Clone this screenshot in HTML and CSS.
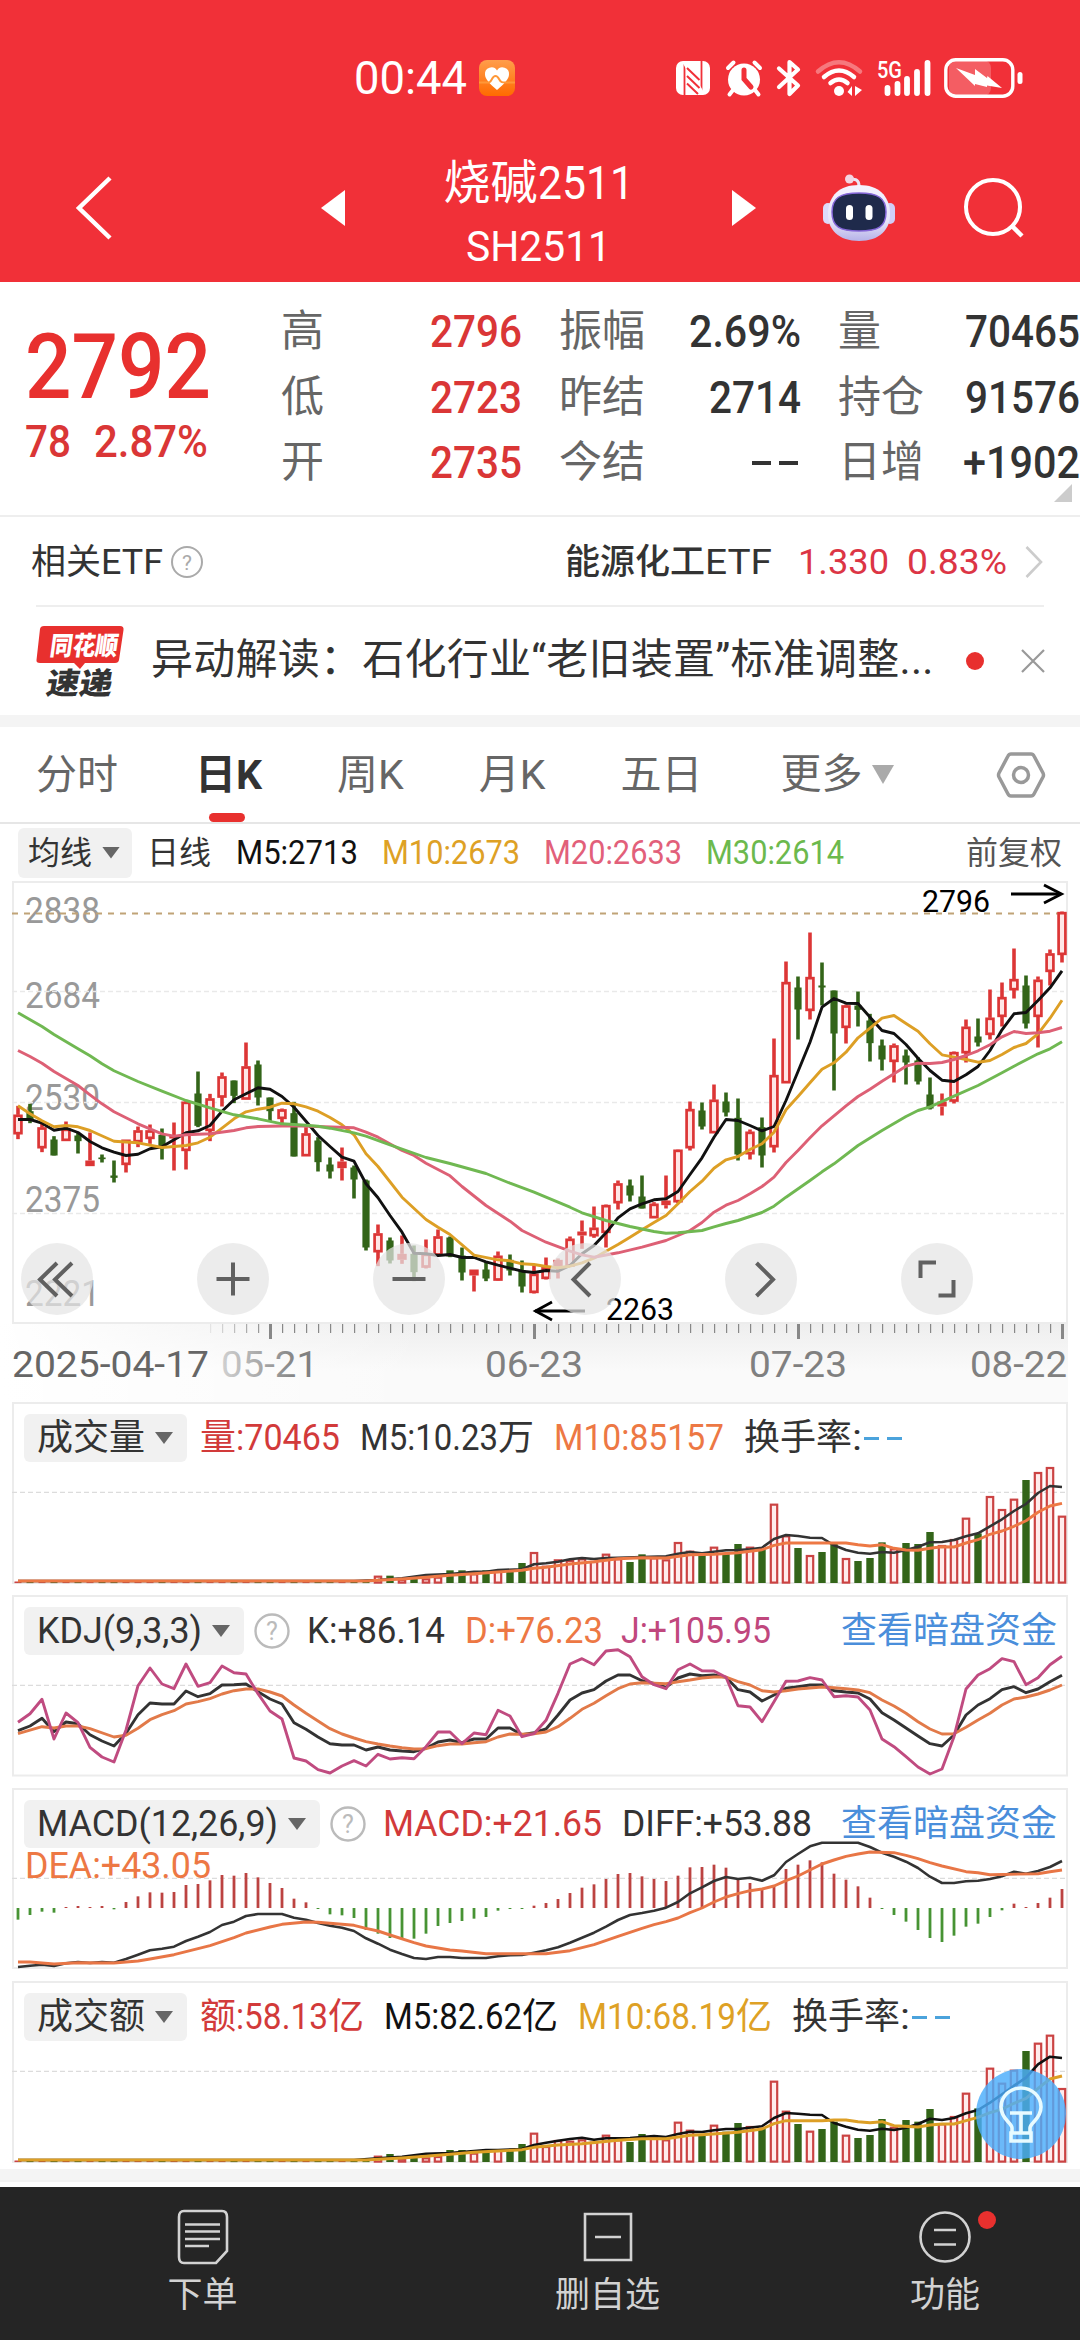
FILE: index.html
```html
<!DOCTYPE html>
<html lang="zh-CN">
<head>
<meta charset="utf-8">
<title>烧碱2511</title>
<link rel="stylesheet" href="styles.css">
</head>
<body>
<header class="top">
  <div class="status">
    <div class="clock"><span class="fit" data-w="113">00:44</span>
      <svg width="36" height="36" viewBox="0 0 36 36"><defs><linearGradient id="hg" x2="0" y2="1"><stop offset="0" stop-color="#ff9d4b"/><stop offset="1" stop-color="#ff6a00"/></linearGradient></defs><rect width="36" height="36" rx="8" fill="url(#hg)"/><path d="M18 30C11 24 6 19 6 14.500A6.500 6.500 0 0 1 18 10.500A6.500 6.500 0 0 1 30 14.500C30 19 25 24 18 30Z" fill="#fff"/><path d="M0 22.500H6C10 22.500 11 23 13 19C15 15 18 15 20 19C22 23 24 22.500 28 22.500H36" fill="none" stroke="#ff9838" stroke-width="2"/></svg>
    </div>
    <div class="signals">
      <svg width="34" height="36" viewBox="0 0 34 36"><rect x="0" y="1" width="34" height="34" rx="7" fill="#fff"/><path d="M8.500 4V35M25.500 1V32" stroke="#f13038" stroke-width="1.800"/><path d="M9 3L26 33" stroke="#fff" stroke-width="4"/><path d="M11 8L23.500 20M11 16L23.500 28M11 23.500L22 34" stroke="#f13038" stroke-width="2"/></svg>
      <svg width="38" height="36" viewBox="0 0 38 36"><circle cx="19" cy="19.500" r="16" fill="#fff"/><path d="M3 8L8.500 2.500M35 8L29.500 2.500M8 30L4.500 34.500M30 30L33.500 34.500" stroke="#fff" stroke-width="4" stroke-linecap="round"/><path d="M19 10V19L26 27" stroke="#f13038" stroke-width="5" fill="none" stroke-linecap="round"/></svg>
      <svg width="24" height="36" viewBox="0 0 24 36"><path d="M2 8.500L21 25.500L12.500 34V2L21 9.500L2 27" fill="none" stroke="#fff" stroke-width="4.200" stroke-linejoin="round" stroke-linecap="round"/></svg>
      <svg width="46" height="36" viewBox="0 0 46 36"><g fill="none" stroke="#fff" stroke-linecap="round" stroke-width="4.500"><path d="M2 11.500Q23-7 44 11.500" opacity=".35"/><path d="M8 17Q23 4 38 17"/><path d="M14.500 23Q23 16 31.500 23"/></g><circle cx="23" cy="31" r="5" fill="#fff"/><path d="M36 26V36L31.500 32ZM39 26V36L46 30Z" fill="#fff"/></svg>
      <svg width="54" height="36" viewBox="0 0 54 36"><text x="0" y="18" font-size="24" font-weight="500" fill="#fff" textLength="25" lengthAdjust="spacingAndGlyphs">5G</text><path d="M10.500 28V33M20.500 24V33M30 19V33M40 12V33M50.500 3V33" stroke="#fff" stroke-width="5.800" stroke-linecap="round"/></svg>
      <svg width="80" height="40" viewBox="0 0 80 40"><rect x="5" y="2" width="42" height="36" rx="8" fill="#fff" opacity=".22"/><rect x="1.800" y="1.800" width="67" height="36.400" rx="10" fill="none" stroke="#fff" stroke-width="3.400"/><rect x="73.500" y="14" width="5" height="12" rx="2.500" fill="#fff"/><path d="M12 10L31 17V11L43 20L43.500 18L58 30L43 27.500V29L31 26V28Z" fill="#fff"/></svg>
    </div>
  </div>
  <nav class="titlebar">
    <svg class="back" width="36" height="64" viewBox="0 0 36 64"><path d="M34 2L3 32L34 62" fill="none" stroke="#fff" stroke-width="4.500"/></svg>
    <svg class="prev" width="24" height="36" viewBox="0 0 24 36"><path d="M24 0V36L0 18Z" fill="#fff"/></svg>
    <div class="name"><b>烧碱<span class="fit" data-w="96">2511</span></b><small><span class="fit" data-w="145">SH2511</span></small></div>
    <svg class="next" width="24" height="36" viewBox="0 0 24 36"><path d="M0 0V36L24 18Z" fill="#fff"/></svg>
    <svg class="robot" width="74" height="68" viewBox="0 0 74 68"><defs><linearGradient id="rb" x2="0" y2="1"><stop offset="0" stop-color="#f5f3ff"/><stop offset=".65" stop-color="#e6e4f8"/><stop offset="1" stop-color="#b5b2e8"/></linearGradient></defs><path d="M37 12C37 6 34 5 28 5" fill="none" stroke="#ebe4f5" stroke-width="3"/><circle cx="27.500" cy="5" r="4.500" fill="#f3d5e2"/><rect x="1" y="29" width="10" height="21" rx="5" fill="#dddafa"/><rect x="63" y="29" width="10" height="21" rx="5" fill="#d1cdf7"/><path d="M37 11C57 11 67 22 68 38C69 56 57 67 37 67C17 67 5 56 6 38C7 22 17 11 37 11Z" fill="url(#rb)"/><path d="M37 19C56 19 64 24 64 38C64 53 56 57 37 57C18 57 10 53 10 38C10 24 18 19 37 19Z" fill="#1f2a4b" stroke="#8567d8" stroke-width="1.500"/><rect x="24" y="31" width="7" height="15" rx="3.500" fill="#fff"/><rect x="43.500" y="31" width="7" height="15" rx="3.500" fill="#fff"/></svg>
    <svg class="search" width="62" height="62" viewBox="0 0 62 62"><circle cx="29" cy="30" r="27" fill="none" stroke="#fff" stroke-width="4"/><path d="M47 48L58 59" stroke="#fff" stroke-width="4.500"/></svg>
  </nav>
</header>

<section class="quote">
  <div class="price"><div class="last"><span class="fit" data-w="186">2792</span></div><div class="chg"><span class="fit" data-w="46">78</span><span class="fit" data-w="114">2.87%</span></div></div>
  <dl class="c1"><dt>高</dt><dd><span class="fit" data-w="92">2796</span></dd><dt>低</dt><dd><span class="fit" data-w="92">2723</span></dd><dt>开</dt><dd><span class="fit" data-w="92">2735</span></dd></dl>
  <dl class="c2"><dt>振幅</dt><dd><span class="fit" data-w="112">2.69%</span></dd><dt>昨结</dt><dd><span class="fit" data-w="92">2714</span></dd><dt>今结</dt><dd class="none"><i></i><i></i></dd></dl>
  <dl class="c3"><dt>量</dt><dd><span class="fit" data-w="115">70465</span></dd><dt>持仓</dt><dd><span class="fit" data-w="115">91576</span></dd><dt>日增</dt><dd><span class="fit" data-w="117">+1902</span></dd></dl>
  <svg class="corner" width="18" height="18" viewBox="0 0 18 18"><path d="M18 0V18H0Z" fill="#ccc"/></svg>
</section>

<section class="etf">
  <span>相关<span class="fit" data-w="62">ETF</span></span>
  <svg class="help" width="34" height="34" viewBox="0 0 34 34"><circle cx="17" cy="17" r="15" fill="none" stroke="#aaa" stroke-width="2"/><text x="17" y="24.500" font-size="21" text-anchor="middle" fill="#aaa">?</text></svg>
  <span class="fund">能源化工<span class="fit" data-w="67">ETF</span></span>
  <span class="red"><span class="fit" data-w="91">1.330</span></span>
  <span class="red pct"><span class="fit" data-w="100">0.83%</span></span>
  <svg class="go" width="18" height="32" viewBox="0 0 18 32"><path d="M1.500 1L16 16L1.500 31" fill="none" stroke="#ccc" stroke-width="2.600"/></svg>
</section>

<section class="news">
  <svg class="badge" width="90" height="74" viewBox="0 0 90 74"><path d="M8 2H84Q88 2 87.500 6L83 36Q82.500 39 79 39H49L44 45L38 39H4Q0 39 .500 36L4 5Q4.500 2 8 2Z" fill="#e8302e"/><text x="0" y="0" transform="translate(13 31) skewX(-8)" font-size="26" font-weight="900" fill="#fff" textLength="68" lengthAdjust="spacingAndGlyphs">同花顺</text><text x="0" y="0" transform="translate(9 70) skewX(-10)" font-size="30" font-weight="900" fill="#333" textLength="66" lengthAdjust="spacingAndGlyphs">速递</text></svg>
  <p>异动解读：石化行业“老旧装置”标准调整...</p>
  <i class="dot"></i>
  <svg class="close" width="24" height="24" viewBox="0 0 24 24"><path d="M1 1L23 23M23 1L1 23" stroke="#999" stroke-width="2.200"/></svg>
</section>

<nav class="tabs">
  <span>分时</span><span class="on">日K</span><span>周K</span><span>月K</span><span>五日</span><span class="more">更多<svg width="22" height="19" viewBox="0 0 22 19"><path d="M0 0H22L11 19Z" fill="#aaa"/></svg></span>
  <svg class="gear" width="48" height="46" viewBox="0 0 48 46"><path d="M14 2H34Q36 2 37 4L46 21Q47 23 46 25L37 42Q36 44 34 44H14Q12 44 11 42L2 25Q1 23 2 21L11 4Q12 2 14 2Z" fill="none" stroke="#999" stroke-width="3.500"/><circle cx="24" cy="23" r="7.500" fill="none" stroke="#999" stroke-width="3.500"/></svg>
</nav>

<section class="ma">
  <span class="chip">均线<i class="tri"></i></span><span class="day">日线</span>
  <span class="m5"><span class="fit" data-w="122">M5:2713</span></span><span class="m10"><span class="fit" data-w="138">M10:2673</span></span><span class="m20"><span class="fit" data-w="138">M20:2633</span></span><span class="m30"><span class="fit" data-w="138">M30:2614</span></span>
  <span class="adj">前复权</span>
</section>

<section class="kline">
  <svg id="kline" width="1056" height="443" viewBox="12 880.500 1056 443"></svg>
  <div class="tools">
    <button><svg viewBox="0 0 72 72"><path d="M36 20L19 36.500L36 53M51 20L34 36.500L51 53"/></svg></button>
    <button><svg viewBox="0 0 72 72"><path d="M36 19.500V52.500M19.500 36H52.500"/></svg></button>
    <button><svg viewBox="0 0 72 72"><path d="M19.500 36H52.500"/></svg></button>
    <button><svg viewBox="0 0 72 72"><path d="M41 20L24.500 36.500L41 53"/></svg></button>
    <button><svg viewBox="0 0 72 72"><path d="M31.500 20L48 36.500L31.500 53"/></svg></button>
    <button><svg viewBox="0 0 72 72"><path d="M19.500 35V19.500H35M37.500 52.500H52.500V37"/></svg></button>
  </div>
</section>
<section class="axis"><svg id="axis" width="1056" height="78" viewBox="12 1324 1056 78"></svg></section>

<section class="panel">
  <svg id="vol" class="plot" width="1056" height="184" viewBox="12 1402 1056 184"></svg>
  <div class="legend"><span class="chip">成交量<i class="tri"></i></span><span class="r">量<span class="fit" data-w="104">:70465</span></span><span><span class="fit" data-w="138">M5:10.23</span>万</span><span class="o"><span class="fit" data-w="170">M10:85157</span></span><span>换手率<span class="fit" data-w="10">:</span></span><span class="dash"><i></i><i></i></span></div>
</section>
<section class="panel">
  <svg id="kdj" class="plot" width="1056" height="184" viewBox="12 1595 1056 184"></svg>
  <div class="legend"><span class="chip"><span class="fit" data-w="165">KDJ(9,3,3)</span><i class="tri"></i></span><svg class="help" width="36" height="36" viewBox="0 0 36 36"><circle cx="18" cy="18" r="16.500" fill="none" stroke="#bbb" stroke-width="2.400"/><text x="18" y="27" font-size="25" text-anchor="middle" fill="#bbb">?</text></svg><span><span class="fit" data-w="138">K:+86.14</span></span><span class="o"><span class="fit" data-w="138">D:+76.23</span></span><span class="p j"><span class="fit" data-w="150">J:+105.95</span></span><span class="link">查看暗盘资金</span></div>
</section>
<section class="panel">
  <svg id="macd" class="plot" width="1056" height="184" viewBox="12 1788 1056 184"></svg>
  <div class="legend"><span class="chip"><span class="fit" data-w="241">MACD(12,26,9)</span><i class="tri"></i></span><svg class="help" width="36" height="36" viewBox="0 0 36 36"><circle cx="18" cy="18" r="16.500" fill="none" stroke="#bbb" stroke-width="2.400"/><text x="18" y="27" font-size="25" text-anchor="middle" fill="#bbb">?</text></svg><span class="r"><span class="fit" data-w="219">MACD:+21.65</span></span><span><span class="fit" data-w="190">DIFF:+53.88</span></span><span class="link">查看暗盘资金</span></div>
  <div class="dea"><span class="fit" data-w="186">DEA:+43.05</span></div>
</section>
<section class="panel">
  <svg id="amt" class="plot" width="1056" height="184" viewBox="12 1981 1056 184"></svg>
  <div class="legend"><span class="chip">成交额<i class="tri"></i></span><span class="r">额<span class="fit" data-w="92">:58.13</span>亿</span><span class="k"><span class="fit" data-w="138">M5:82.62</span>亿</span><span class="y"><span class="fit" data-w="158">M10:68.19</span>亿</span><span>换手率<span class="fit" data-w="10">:</span></span><span class="dash"><i></i><i></i></span></div>
  <svg class="bulb" width="90" height="90" viewBox="0 0 90 90"><circle cx="45" cy="45" r="45" fill="#4badfb" opacity=".82"/><g fill="none" stroke="#e8fbff" stroke-width="3.600"><path d="M36 64V59C36 54 25 50 25 38A20 19 0 0 1 65 38C65 50 54 54 54 59V64"/><path d="M35 64H55V72H35ZM34 44H56M45 44V63"/></g></svg>
</section>
<div class="strip"></div>

<footer>
  <a><svg width="52" height="56" viewBox="0 0 52 56"><path d="M7 2H45Q50 2 50 8V42L39 54H7Q2 54 2 48V8Q2 2 7 2Z"/><path d="M8 15.500H43M8 22.500H43M8 30H43M8 37H32"/></svg>下单</a>
  <a><svg width="52" height="56" viewBox="0 0 52 56"><path d="M3 5H49V51H3ZM13 28H39"/></svg>删自选</a>
  <a><svg width="52" height="56" viewBox="0 0 52 56"><circle cx="26" cy="28" r="24.500"/><path d="M15 21H37M15 35.500H37"/></svg>功能<i class="dot"></i></a>
</footer>
<script src="chart.js"></script>
</body>
</html>
```
FILE: styles.css
```css
* { box-sizing: border-box; margin: 0; padding: 0; }
body { width: 1080px; height: 2340px; overflow: hidden; background: #fff; color: #333; font-family: Roboto, "Noto Sans CJK SC", sans-serif; font-size: 36px; line-height: 1; white-space: nowrap; }
svg { display: block; flex: none; overflow: visible; }
svg text { font-family: Roboto, "Noto Sans CJK SC", sans-serif; }
i { font-style: normal; }
.fit { display: inline-block; transform-origin: 0 50%; }

.top { height: 282px; background: #f13038; color: #fff; }
.status { height: 118px; padding: 58px 59px 0 354px; display: flex; justify-content: space-between; align-items: flex-start; }
.clock { display: flex; align-items: center; height: 40px; gap: 12px; font-size: 46px; }
.signals { display: flex; align-items: center; height: 40px; margin-right: -3px; }
.signals svg + svg { margin-left: 15px; }
.signals svg:nth-child(3) { margin-left: 14px; }
.signals svg:nth-child(6) { margin-left: 13px; }
.titlebar { height: 164px; display: flex; align-items: center; padding: 0 54px 0 76px; }
.titlebar > svg { position: relative; top: 8px; }
.back { margin-right: 209px; }
.name { width: 391px; height: 164px; padding-top: 40px; text-align: center; display: flex; flex-direction: column; align-items: center; }
.name b { font-weight: 400; font-size: 47px; line-height: 50px; }
.name small { font-size: 43px; line-height: 50px; margin-top: 13px; }
.robot { margin-left: 66px; }
.search { margin-left: 68px; }

.quote { height: 235px; border-bottom: 2px solid #eee; display: flex; position: relative; font-size: 45px; }
.price { width: 281px; padding: 44px 0 0 25px; color: #e8302e; font-weight: 500; }
.last { font-size: 90px; line-height: 84px; }
.chg { display: flex; gap: 23px; color: #da3636; margin-top: 7px; font-size: 44px; line-height: 50px; }
.quote dl { display: grid; grid-template-columns: auto 1fr; grid-auto-rows: 65.500px; padding-top: 17px; line-height: 65px; }
.quote dt { font-size: 43px; color: #666; }
.quote dd { text-align: right; font-weight: 500; }
.c1 { width: 241px; }
.c1 dd { color: #da3636; }
.c2 { width: 242px; margin-left: 37px; }
.c3 { width: 242px; margin-left: 37px; }
.quote .none { display: flex; justify-content: flex-end; align-items: center; gap: 8px; padding-right: 3px; }
.none i { width: 19px; height: 4px; background: #333; }
.corner { position: absolute; right: 8px; bottom: 13px; }

.etf { height: 90px; margin: 0 36px; border-bottom: 2px solid #eee; display: flex; align-items: center; font-size: 35px; padding-top: 2px; }
.etf > span:first-child { margin-left: -5px; }
.etf .help { margin-left: 7px; }
.fund { margin-left: 361px; font-weight: 500; }
.fund .fit { font-weight: 400; }
.red { color: #dc3545; margin-left: 26px; }
.pct { margin-left: 18px; }
.go { margin-left: 18px; }

.news { height: 108px; display: flex; align-items: center; padding-left: 36px; }
.badge { margin-right: 25px; }
.news p { width: 800px; font-size: 42px; line-height: 60px; margin-top: -2px; letter-spacing: .25px; }
.dot { display: block; width: 18px; height: 18px; border-radius: 50%; background: #e8302e; }
.news .dot { margin-left: 15px; }
.close { margin-left: 37px; }

.tabs { height: 109px; border-top: 12px solid #f4f4f4; border-bottom: 2px solid #e6e6e6; padding-left: 36px; display: flex; font-size: 41px; line-height: 97px; color: #666; }
.tabs span { position: relative; margin-right: 75px; height: 95px; }
.tabs .on { color: #333; font-weight: 700; margin-left: 2px; }
.tabs .on::after { content: ""; position: absolute; left: 14px; bottom: 0; width: 36px; height: 9px; border-radius: 5px; background: #e8302e; }
.tabs .more { display: flex; align-items: center; gap: 9px; margin: 0 103px 0 3px; }
.gear { margin-top: 25px; }

.ma { height: 57px; padding: 3px 18px; display: flex; align-items: center; font-size: 32px; }
.chip { display: flex; align-items: center; background: #f1f1f1; border-radius: 6px; color: #333; }
.ma .chip { height: 50px; padding: 0 12px 0 10px; gap: 10px; margin-right: 15px; }
.tri { width: 18px; height: 12px; background: #666; clip-path: polygon(0 0, 100% 0, 50% 100%); }
.ma .fit { font-size: 33px; font-weight: 450; }
.day { margin-right: 25px; }
.m5 { color: #111; margin-right: 24px; }
.m10 { color: #dea125; margin-right: 24px; }
.m20 { color: #e2607a; margin-right: 24px; }
.m30 { color: #6cb94d; }
.adj { margin-left: auto; color: #555; }

.kline { height: 443px; padding-left: 12px; position: relative; }
.tools { position: absolute; left: 21px; top: 362px; display: flex; gap: 104px; }
.tools button { width: 72px; height: 72px; border: 0; border-radius: 50%; background: rgba(229, 229, 229, .72); }
.tools path { fill: none; stroke: #606060; stroke-width: 4; }
.axis { height: 78px; padding-left: 12px; background: linear-gradient(90deg, #fff, rgba(255, 255, 255, 0) 40%), linear-gradient(#eee, #fafafa 60%, #fafafa); margin-right: 12px; }

.panel { position: relative; height: 193px; margin: 0 12px; }
.plot { position: absolute; left: 0; top: 0; }
.legend { position: relative; display: flex; align-items: center; padding: 12px 11px 0 12px; gap: 20px; }
.legend > .chip { height: 48px; padding: 0 14px 0 13px; gap: 10px; margin-right: -7px; border-radius: 6px; }
.legend .fit, .dea { font-weight: 450; }
.legend .help { margin: 0 -3px 0 -3px; }
.j { margin-left: -2px; }
.r { color: #d23a3a; }
.o, .dea { color: #ed7844; }
.p { color: #c0477d; }
.k { color: #111; }
.y { color: #dea125; }
.link { color: #4a8edb; margin-left: auto; }
.dash { display: flex; gap: 8px; margin-left: -18px; }
.dash i { width: 15px; height: 3px; background: #4ba3dc; }
.dea { position: absolute; left: 13px; top: 60px; }
.bulb { position: absolute; left: 964px; top: 88px; }
.strip { height: 13px; margin-bottom: 5px; margin-top: -5px; background: #f4f4f4; }

footer { height: 153px; background: #252525; display: grid; grid-template-columns: 3fr 3fr 2fr; color: #d2d2d2; }
footer a { position: relative; display: flex; flex-direction: column; align-items: center; gap: 11px; padding-top: 22px; font-size: 35px; line-height: 40px; }
footer svg { fill: none; stroke: #d2d2d2; stroke-width: 2.600; }
footer .dot { position: absolute; left: 168px; top: 24px; }
```
FILE: chart.js
```js
// Series are "index:value" lists; values are thirds of a pixel below each panel's origin.
const X = i => 18 + 12 * i;
const RED = '#dc3636', GREEN = '#336519';

function pairs(s) { return s.split(',').map(t => t.split(':').map(Number)); }
function line(s, oy, color, w = 2.9) {
  const pts = pairs(s).map(([i, v]) => X(i) + ',' + (v / 3 + oy).toFixed(1)).join(' ');
  return `<polyline points="${pts}" fill="none" stroke="${color}" stroke-width="${w}" stroke-linejoin="round"/>`;
}
function seg(x1, y1, x2, y2, c, w, dash) {
  return `<path d="M${x1} ${y1}L${x2} ${y2}" stroke="${c}" stroke-width="${w}" fill="none"${dash ? ` stroke-dasharray="${dash}"` : ''}/>`;
}
function text(x, y, s, w, c, size = 36, weight = 450, extra = '') {
  return `<text x="${x}" y="${y}" font-size="${size}" font-weight="${weight}" fill="${c}" textLength="${w}" lengthAdjust="spacingAndGlyphs" ${extra}>${s}</text>`;
}
function frame(y, h) { return `<rect x="13" y="${y}" width="1054" height="${h}" fill="#fff" stroke="#ececec" stroke-width="2"/>`; }

// daily candles: colour, high, body top, body bottom, low
const candles = `R706,733,788,806 G700,722,750,758 R758,771,830,845 G797,807,855,855 R753,775,808,808 G787,795,812,849 R786,870,887,887 G852,861,866,876 G870,915,922,936 R808,808,880,906 R768,780,812,830 R762,780,802,820 G774,793,830,867 R756,796,804,900 R692,694,838,897 G603,669,766,770 R670,684,778,812 R606,618,678,708 G630,630,676,698 R516,588,684,684 G570,582,681,705 G681,681,722,752 R714,717,742,758 G694,728,858,858 R770,789,854,854 G800,810,875,903 G861,882,903,924 R831,873,893,930 G885,891,927,984 G927,930,1131,1140 R1062,1089,1142,1187 G1101,1110,1170,1179 R1095,1150,1168,1180 G1125,1150,1205,1232 R1107,1150,1188,1194 R1077,1098,1152,1155 G1098,1101,1158,1160 G1131,1155,1206,1230 R1197,1197,1215,1263 G1175,1197,1224,1232 R1143,1156,1227,1230 G1152,1168,1200,1215 G1170,1200,1248,1266 R1185,1210,1264,1269 R1161,1190,1222,1227 R1164,1168,1188,1224 R1098,1105,1185,1188 R1050,1083,1095,1135 R1008,1072,1094,1102 R1002,1004,1084,1131 R930,939,995,1017 G927,945,975,993 G915,978,1014,1014 R995,1000,1040,1042 R915,990,1004,1014 R837,838,992,998 R693,716,830,840 G696,720,768,777 R642,688,785,785 G666,693,726,738 G684,742,852,870 R777,784,848,867 G741,770,855,891 R504,614,827,846 R273,335,635,636 G318,351,417,507 R186,320,418,447 G276,345,351,405 G360,360,489,660 R402,405,469,519 G363,405,418,468 G430,450,518,573 G507,525,567,600 R519,525,571,636 G537,555,576,642 G560,570,633,642 G621,672,714,717 R669,693,708,735 R543,545,690,699 R447,469,545,576 G444,498,516,528 R357,442,490,507 R336,380,436,468 R234,326,356,384 G315,345,459,474 R318,328,436,531 R237,249,301,345 R123,125,250,276`.split(' ');

{
  const O = 870;
  let s = frame(881.5, 441);
  [[922.7, 2838], [1007.7, 2684], [1109.3, 2530], [1211.7, 2375], [1305.3, 2221]].forEach(([y, t]) => s += text(25, y, t, 75, '#999'));
  [991, 1102, 1213].forEach(y => s += seg(12, y, 1064, y, '#e9e9e9', 1.6, '5 3'));
  s += seg(12, 913, 1058, 913, '#c0a377', 2, '6 6');
  candles.forEach((d, i) => {
    const [h, t, b, l] = d.slice(1).split(',').map(v => v / 3 + O), x = X(i);
    if (d[0] === 'G') s += seg(x, h, x, l, GREEN, 3.6) + `<rect x="${x - 3.6}" y="${t}" width="7.2" height="${b - t}" fill="${GREEN}"/>`;
    else {
      s += seg(x, h, x, t, RED, 3.6) + seg(x, b, x, l, RED, 3.6);
      s += b - t < 7 ? `<rect x="${x - 4.7}" y="${t}" width="9.4" height="${b - t}" fill="${RED}"/>`
        : `<rect x="${x - 3.4}" y="${t + 1}" width="6.8" height="${b - t - 1}" fill="#ffe6e6" stroke="${RED}" stroke-width="2.7"/>`;
    }
  });
  s += line('0:747,1:747,2:758,3:779,4:773,5:786,6:813,7:832,8:845,9:855,10:851,11:835,12:829,13:808,14:787,15:781,16:765,17:722,18:688,19:670,20:652,21:656,22:678,23:710,24:752,25:795,26:828,27:860,28:872,29:940,30:982,31:1035,32:1085,33:1148,34:1150,35:1155,36:1152,37:1161,38:1161,39:1174,40:1184,41:1193,42:1202,43:1206,44:1200,45:1202,46:1185,47:1150,48:1125,49:1087,50:1042,51:1015,52:1000,53:988,54:985,55:963,56:912,57:862,58:800,59:747,60:750,61:765,62:781,63:768,64:690,65:603,66:515,67:410,68:384,69:398,70:399,71:440,72:480,73:489,74:522,75:563,76:600,77:629,78:633,79:613,80:588,81:540,82:478,83:430,84:426,85:390,86:352,87:301', O, '#111');
  s += line('0:706,1:730,2:751,3:769,4:765,5:769,6:780,8:812,10:817,12:831,14:825,15:817,16:800,17:773,18:745,19:724,20:716,21:710,22:698,23:700,24:709,25:722,26:741,27:763,28:793,29:850,30:888,32:980,34:1047,35:1070,36:1092,38:1154,40:1168,41:1171,42:1180,43:1182,44:1188,45:1192,46:1187,47:1177,48:1163,49:1142,50:1122,51:1100,52:1078,53:1056,54:1035,55:1000,56:963,57:932,58:893,59:868,60:858,61:837,62:820,63:785,64:718,65:678,66:637,67:596,68:577,69:545,70:502,71:473,72:443,73:435,74:459,75:482,76:520,77:553,78:560,79:567,80:575,81:570,82:552,83:531,84:519,85:490,86:443,87:389', O, '#dd9f25');
  s += line('0:540,1:558,2:578,3:603,5:645,6:673,7:700,8:724,10:760,12:790,13:797,14:793,16:790,18:780,19:772,20:768,23:766,28:772,29:785,30:800,32:840,33:855,34:878,36:916,37:948,39:1005,41:1052,42:1080,44:1115,46:1142,47:1153,48:1160,50:1147,52:1130,54:1110,56:1080,57:1056,58:1025,59:1004,60:990,61:970,62:948,63:920,64:876,65:840,66:802,67:766,68:736,69:706,70:678,71:656,72:632,73:610,74:587,75:578,76:579,77:576,78:567,79:555,80:541,81:523,82:499,83:483,84:489,85:487,86:482,87:471', O, '#dd6075');
  s += line('0:427,2:468,3:492,5:535,6:556,7:580,8:601,10:633,12:662,14:690,16:712,18:733,20:745,22:760,24:764,25:767,26:773,28:787,29:797,31:823,34:861,36:879,39:909,41:938,43:965,46:1010,47:1027,49:1050,51:1068,53:1083,54:1088,55:1087,57:1080,58:1069,59:1059,60:1050,62:1026,63:1007,64:980,66:930,67:904,68:880,70:825,72:780,74:738,75:720,76:709,78:677,80:645,82:607,83:587,85:550,86:535,87:514', O, '#70b852');
  s += text(922, 911, 2796, 68, '#000', 31, 400) + seg(1011, 893.5, 1061, 893.5, '#000', 2.8) + '<path d="M1044 884.5L1061.500 893.500L1044 902.500" fill="none" stroke="#000" stroke-width="2.8"/>';
  s += text(606, 1319.5, 2263, 68, '#000', 31, 400) + seg(535, 1310.5, 585, 1310.5, '#000', 2.8) + '<path d="M552 1301.5L535.500 1310.500L552 1319.500" fill="none" stroke="#000" stroke-width="2.8"/>';
  document.getElementById('kline').innerHTML = s;
}

{
  let s = '<defs><linearGradient id="fd" gradientUnits="userSpaceOnUse" x1="210" x2="300" y1="0" y2="0"><stop offset="0" stop-color="#808080" stop-opacity=".25"/><stop offset="1" stop-color="#808080"/></linearGradient></defs>';
  for (let i = 16; i < 88; i++) {
    const major = (i - 21) % 22 === 0, op = i < 21 ? (i - 15) * .17 : 1;
    s += `<rect x="${X(i) + (major ? -1 : 0)}" y="1324" width="${major ? 3 : 1.2}" height="${major ? 15 : 9}" fill="#888" opacity="${op}"/>`;
  }
  s += text(12, 1377, '2025-04-17', 197, '#666') + text(221, 1377, '05-21', 97, 'url(#fd)');
  s += text(485, 1377, '06-23', 98, '#808080') + text(749, 1377, '07-23', 98, '#808080') + text(970, 1377, '08-22', 97, '#808080');
  document.getElementById('axis').innerHTML = s;
}

function bars(spec, base, oy) {
  let s = '';
  for (let i = 0; i < 30; i++) s += `<rect x="${X(i) - 3.5}" y="${base - 1.5}" width="7" height="1.6" fill="${candles[i][0] === 'R' ? '#cb4343' : GREEN}"/>`;
  spec.split(' ').forEach((v, k) => {
    const i = k + 30, y = v / 3 + oy, x = X(i);
    s += candles[i][0] === 'G' ? `<rect x="${x - 3.7}" y="${y}" width="7.4" height="${base - y}" fill="${GREEN}"/>`
      : `<rect x="${x - 3.2}" y="${y + 1}" width="6.4" height="${base - y - 1.4}" fill="#ffecec" stroke="#cb4343" stroke-width="2.2"/>`;
  });
  return s;
}
function dashed(y) { return seg(12, y, 1065, y, '#dcdcdc', 1.2, '5 3'); }

{
  const O = 1390;
  let s = frame(1403, 180) + dashed(1492.4);
  s += bars('557 557 567 563 565 560 541 541 550 541 541 545 519 486 527 508 510 505 513 491 505 516 493 502 508 456 482 495 470 490 462 470 478 341 436 474 495 486 460 504 513 504 457 475 459 462 426 465 447 383 430 318 357 326 270 246 231 377', 1583, O);
  s += line('0:573,28:573,30:570,32:565,34:555,36:552,38:545,39:545,40:540,42:538,43:523,44:520,45:515,46:508,47:504,48:507,49:504,50:503,52:501,54:499,55:491,56:486,57:490,58:485,59:481,60:480,61:478,62:473,63:447,64:435,65:438,66:443,67:444,68:466,69:480,70:488,71:491,72:486,73:488,74:480,75:470,76:457,77:456,78:450,79:439,80:430,81:409,82:388,83:363,84:342,85:309,86:288,87:291', O, '#333', 2.6);
  s += line('0:573,29:573,30:571,32:567,34:562,36:556,38:551,40:546,42:541,43:535,44:532,46:522,48:515,50:506,52:503,54:504,56:494,58:493,60:488,62:479,63:466,64:459,69:459,70:464,71:468,72:464,73:475,74:480,75:481,76:475,77:470,78:471,79:459,80:449,81:433,82:423,83:409,84:392,85:367,86:348,87:340', O, '#ed7844');
  document.getElementById('vol').innerHTML = s;
}
{
  const O = 1390;
  let s = frame(1596, 179.5) + dashed(1685.4);
  s += line('0:1022,1:1008,2:985,3:1025,4:996,5:1001,6:1034,7:1053,8:1068,9:1030,10:974,11:939,12:942,13:942,14:903,15:920,16:911,17:885,18:884,19:882,20:905,21:927,22:942,23:998,24:1018,25:1041,26:1061,27:1065,28:1065,29:1080,30:1071,31:1080,32:1083,33:1085,34:1075,35:1056,36:1050,37:1058,38:1047,39:1047,40:1014,41:1014,42:1034,43:1028,44:1017,45:975,46:930,47:909,48:899,49:873,50:855,51:855,52:872,53:880,54:892,55:864,56:852,57:857,58:855,59:862,60:899,61:906,62:933,63:915,64:895,65:890,66:885,67:885,68:902,69:906,70:909,71:927,72:968,73:990,74:1014,75:1038,76:1061,77:1068,78:1035,79:975,80:945,81:926,82:899,83:890,84:908,85:897,86:875,87:856', O, '#333');
  s += line('0:1031,2:1010,3:1014,4:1008,5:1008,6:1016,8:1041,9:1036,10:1015,11:989,12:974,13:962,14:942,15:935,16:926,17:912,18:902,19:897,20:897,21:906,22:918,23:945,24:970,25:993,26:1016,27:1032,28:1044,29:1055,30:1062,31:1068,32:1073,33:1077,34:1076,35:1067,36:1062,37:1062,38:1058,39:1055,40:1041,41:1032,42:1033,43:1031,44:1026,45:1010,46:985,47:958,48:940,49:917,50:896,51:882,52:878,54:881,55:875,56:870,57:864,58:861,59:861,60:875,61:885,62:902,63:906,64:902,65:897,66:894,67:891,68:893,69:896,70:900,71:908,72:930,73:948,74:970,75:995,76:1017,77:1032,78:1031,79:1012,80:990,81:970,82:945,83:927,84:921,85:912,86:900,87:885', O, '#e27a49');
  s += line('0:997,1:971,2:928,3:1047,4:969,5:998,6:1072,7:1101,8:1116,9:1020,10:887,11:834,12:882,13:896,14:822,15:889,16:878,17:828,18:848,19:852,20:911,21:963,22:987,23:1104,24:1113,25:1139,26:1149,27:1128,28:1112,29:1128,30:1093,31:1107,32:1103,33:1106,34:1070,35:1026,36:1026,37:1061,38:1029,39:1034,40:961,41:978,42:1040,43:1031,44:991,45:910,46:822,47:806,48:824,49:783,50:779,51:800,52:860,53:884,54:896,55:839,56:822,57:842,58:843,59:862,60:947,61:951,62:995,63:935,64:874,65:873,66:863,67:870,68:920,69:917,70:921,71:960,72:1047,73:1070,74:1100,75:1131,76:1152,77:1137,78:1040,79:897,80:855,81:836,82:806,83:815,84:884,85:863,86:824,87:799', O, '#c04b80');
  document.getElementById('kdj').innerHTML = s;
}
{
  const O = 1780;
  let s = frame(1789, 179) + dashed(1878.4);
  '419 405 395 398 381 378 381 378 388 366 349 337 338 336 315 312 301 285 287 279 292 309 324 356 367 387 403 406 414 450 461 474 475 476 461 438 429 423 416 411 392 387 387 377 369 357 339 323 313 297 282 279 289 297 303 287 262 261 254 263 300 309 330 318 267 254 241 247 281 299 319 353 387 405 425 450 474 486 467 440 431 411 391 371 381 369 353 327'.split(' ').forEach((v, i) => {
    s += seg(X(i), 384 / 3 + O, X(i), v / 3 + O, v > 384 ? '#479334' : '#bc4341', 2.8);
  });
  s += line('0:561,1:557,2:554,3:558,4:550,5:546,6:549,7:546,8:548,9:537,10:524,11:511,12:506,13:500,14:483,15:470,16:456,17:435,18:425,19:408,20:402,22:402,23:413,24:419,25:429,26:437,27:443,28:453,29:475,30:491,31:509,32:522,33:534,34:537,35:531,36:531,37:534,39:534,40:529,41:526,42:525,43:518,44:511,45:502,46:488,47:473,48:458,49:440,50:420,51:405,52:399,53:392,54:383,55:366,56:340,57:322,58:303,59:291,60:297,61:293,62:302,63:286,64:246,65:222,66:199,67:188,70:188,71:201,72:218,73:230,74:245,75:264,76:290,77:309,78:309,79:304,80:302,81:297,82:289,83:275,84:281,85:273,86:261,87:243', O, '#333', 2.6);
  s += line('0:546,1:546,3:552,5:548,8:549,10:543,11:537,13:524,15:506,16:497,18:473,19:459,21:441,22:433,24:426,25:427,26:430,28:436,29:445,30:453,31:465,33:488,34:498,36:510,37:513,39:521,44:521,46:512,48:494,50:469,52:445,53:434,54:425,55:414,56:398,57:384,58:366,59:351,60:341,61:332,62:327,63:318,64:302,65:288,66:270,67:252,68:240,69:229,70:222,71:216,73:218,74:226,75:236,76:248,77:258,79:275,80:278,81:284,85:281,86:275,87:270', O, '#e87646');
  document.getElementById('macd').innerHTML = s;
}
{
  const O = 1780;
  let s = frame(1982, 180) + dashed(2071.4);
  s += bars('1127 1122 1135 1130 1132 1128 1110 1110 1118 1107 1108 1112 1092 1058 1098 1080 1082 1078 1085 1064 1078 1086 1062 1072 1078 1025 1049 1062 1034 1055 1029 1038 1045 902 992 1032 1052 1047 1025 1064 1074 1065 1017 1040 1020 1025 987 1030 1008 938 985 863 908 869 813 788 764 924', 2162, O);
  s += line('0:1140,28:1140,30:1135,32:1130,34:1121,36:1119,38:1113,39:1110,40:1110,42:1107,43:1095,44:1088,45:1082,46:1077,47:1073,48:1079,49:1075,51:1074,53:1068,54:1071,55:1062,56:1055,57:1056,58:1051,59:1047,60:1047,62:1039,63:1014,64:999,65:1001,66:1004,67:1005,68:1029,69:1040,70:1049,71:1052,72:1046,73:1050,74:1043,75:1032,76:1016,77:1020,78:1014,79:1000,80:990,81:968,82:943,83:917,84:893,85:853,86:830,87:834', O, '#111', 2.6);
  s += line('0:1140,29:1140,30:1138,32:1134,34:1129,36:1123,38:1117,40:1113,42:1109,43:1102,45:1095,47:1091,50:1081,52:1076,54:1076,56:1066,57:1064,60:1057,62:1047,63:1031,64:1022,67:1022,68:1020,69:1020,70:1025,71:1028,72:1025,73:1037,75:1041,76:1035,77:1032,78:1032,79:1022,80:1012,81:998,82:988,83:970,84:955,85:925,86:897,87:888', O, '#dd9f25');
  document.getElementById('amt').innerHTML = s;
}

document.querySelectorAll('.fit').forEach(el => {
  const w = +el.dataset.w, n = el.getBoundingClientRect().width;
  el.style.width = w + 'px';
  el.style.textAlign = 'left';
  el.style.transform = `scaleX(${w / n})`;
});
```
